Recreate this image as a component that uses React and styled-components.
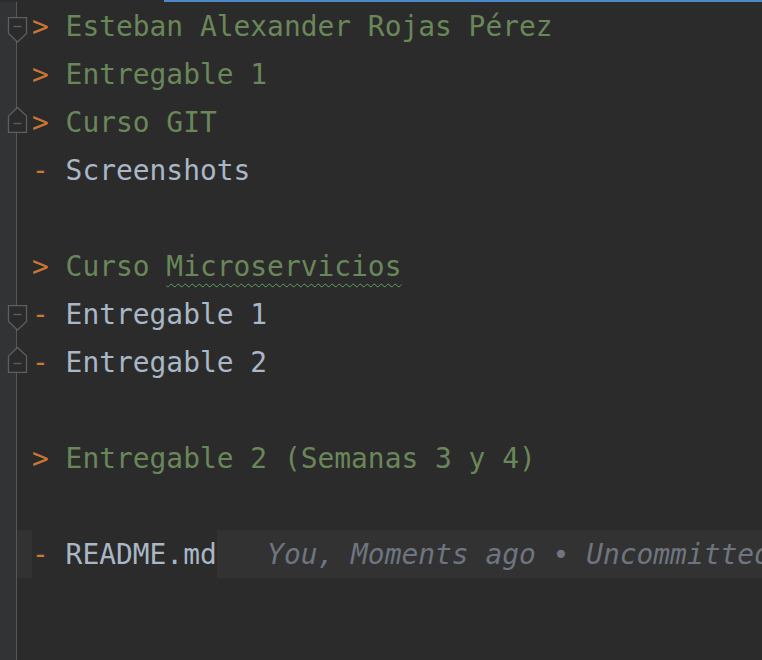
import React from "react";
import styled, { createGlobalStyle } from "styled-components";

const GlobalStyle = createGlobalStyle`
  html, body {
    margin: 0;
    padding: 0;
    background: #2b2b2b;
    overflow: hidden;
  }
`;

const Editor = styled.div`
  display: flex;
  flex-direction: column;
  width: 762px;
  height: 660px;
  overflow: hidden;
  background: #2b2b2b;
  font-family: "DejaVu Sans Mono", "Liberation Mono", monospace;
  font-size: 27.9px;
`;

const TopBar = styled.div`
  height: 2px;
  flex: none;
  display: flex;
`;

const TabIndicator = styled.div`
  margin-left: 164px;
  flex: 1;
  background: #4b89c8;
`;

const Body = styled.div`
  display: flex;
  flex: 1;
  min-width: 0;
`;

const Gutter = styled.div`
  width: 16px;
  flex: none;
  background: #313335;
  border-right: 1px solid #555759;
`;

const Lines = styled.div`
  flex: 1;
  min-width: 0;
  display: flex;
  flex-direction: column;
`;

const Line = styled.div`
  position: relative;
  display: flex;
  height: 48px;
  line-height: 50px;
  white-space: pre;
`;

const Margin = styled.div`
  width: 15px;
  flex: none;
  background: ${(props) => (props.current ? "#323232" : "transparent")};
`;

const Code = styled.span`
  color: #a9b7c6;
`;

const Marker = styled.span`
  color: #cc7832;
`;

const Heading = styled.span`
  color: #6a8759;
`;

const Typo = styled.span`
  text-decoration: underline wavy #5f9e63;
  text-decoration-thickness: 1px;
  text-underline-offset: 7px;
`;

const Hint = styled.span`
  flex: 1;
  min-width: 0;
  overflow: hidden;
  background: #323232;
  color: #6e7580;
  font-style: italic;
`;

const FoldIcon = styled.svg`
  position: absolute;
  left: -10px;
  top: ${(props) => (props.$end ? "9px" : "15px")};
  width: 21px;
  height: 26px;
`;

function Fold({ end }) {
  return (
    <FoldIcon $end={end} viewBox="0 0 21 26">
      {end ? (
        <>
          <path
            d="M10.5 0.5 L19.5 9 V25.5 H1.5 V9 Z"
            fill="#2b2b2b"
            stroke="#5c5e60"
            strokeWidth="1.3"
          />
          <path d="M6.5 16.5 H14.5" stroke="#5c5e60" strokeWidth="1.3" />
        </>
      ) : (
        <>
          <path
            d="M1.5 0.5 H19.5 V16.5 L10.5 25 L1.5 16.5 Z"
            fill="#2b2b2b"
            stroke="#5c5e60"
            strokeWidth="1.3"
          />
          <path d="M6.5 9.5 H14.5" stroke="#5c5e60" strokeWidth="1.3" />
        </>
      )}
    </FoldIcon>
  );
}

function HeadingLine({ children, fold }) {
  return (
    <Line>
      {fold && <Fold end={fold === "end"} />}
      <Margin />
      <Marker>{"> "}</Marker>
      <Heading>{children}</Heading>
    </Line>
  );
}

function ItemLine({ children, fold, current, hint }) {
  return (
    <Line>
      {fold && <Fold end={fold === "end"} />}
      <Margin current={current} />
      <Marker>{"- "}</Marker>
      <Code>{children}</Code>
      {hint && <Hint>{"   " + hint}</Hint>}
    </Line>
  );
}

export default function App() {
  return (
    <>
      <GlobalStyle />
      <Editor>
        <TopBar>
          <TabIndicator />
        </TopBar>
        <Body>
          <Gutter />
          <Lines>
            <HeadingLine fold="start">Esteban Alexander Rojas Pérez</HeadingLine>
            <HeadingLine>Entregable 1</HeadingLine>
            <HeadingLine fold="end">Curso GIT</HeadingLine>
            <ItemLine>Screenshots</ItemLine>
            <Line />
            <HeadingLine>
              Curso <Typo>Microservicios</Typo>
            </HeadingLine>
            <ItemLine fold="start">Entregable 1</ItemLine>
            <ItemLine fold="end">Entregable 2</ItemLine>
            <Line />
            <HeadingLine>Entregable 2 (Semanas 3 y 4)</HeadingLine>
            <Line />
            <ItemLine current hint="You, Moments ago • Uncommitted changes">
              README.md
            </ItemLine>
          </Lines>
        </Body>
      </Editor>
    </>
  );
}
